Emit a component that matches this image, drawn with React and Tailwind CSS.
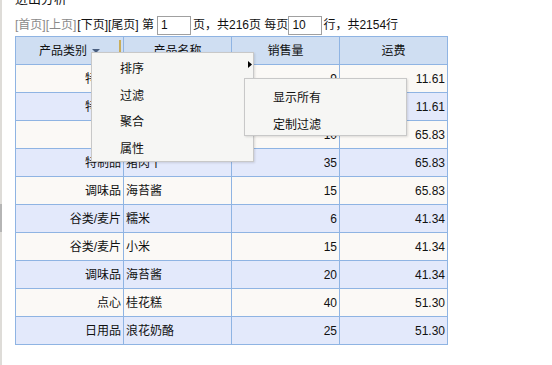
const rows = [
  ['特制品', '猪肉干', '9', '11.61'],
  ['特制品', '牛肉干', '9', '11.61'],
  ['饮料', '绿茶', '10', '65.83'],
  ['特制品', '猪肉干', '35', '65.83'],
  ['调味品', '海苔酱', '15', '65.83'],
  ['谷类/麦片', '糯米', '6', '41.34'],
  ['谷类/麦片', '小米', '15', '41.34'],
  ['调味品', '海苔酱', '20', '41.34'],
  ['点心', '桂花糕', '40', '51.30'],
  ['日用品', '浪花奶酪', '25', '51.30'],
];

const font = { fontFamily: '"Liberation Sans", "Noto Sans CJK SC", sans-serif' };

const Pager = () => (
  <div className="mt-[9px] flex h-[19px] items-center text-[12px] leading-[19px] text-[#111]">
    <span className="text-[#8a8a8a]">[首页][上页]</span>
    <span className="ml-[1px]">[下页][尾页] 第</span>
    <div className="ml-[3px] h-[19px] w-[34px] border border-[#a0a0a0] bg-white pl-[3px] text-[12px] leading-[17px]">1</div>
    <span className="ml-[2px]">页，共216页 每页</span>
    <div className="h-[19px] w-[34px] border border-[#a0a0a0] bg-white pl-[3px] text-[12px] leading-[17px]">10</div>
    <span className="ml-[1px]">行，共2154行</span>
  </div>
);

const Cell = ({ children, align = 'right', last = false }) => (
  <div
    className={`flex h-full items-center px-[2px] ${last ? 'w-[107px]' : 'w-[108px] border-r border-[#8fb4e3]'} ${
      align === 'right' ? 'justify-end' : 'justify-start'
    }`}
  >
    {children}
  </div>
);

const Table = () => (
  <div className="mt-[1px] w-[433px] border-l border-r border-t border-[#8fb4e3] text-[12px] text-[#111]">
    <div className="flex h-[28px] border-b border-[#8fb4e3] bg-[#cfdef2]">
      <div className="relative flex h-full w-[108px] items-center justify-center border-r border-[#8fb4e3]">
        <span>产品类别</span>
        <svg width="8" height="4" viewBox="0 0 8 4" className="ml-[5px]">
          <path d="M0 0 H8 L4 4 Z" fill="#4a5f80" />
        </svg>
        <div className="absolute right-[2px] top-[3px] h-[20px] w-[2px] bg-[#c9ad5a]"></div>
      </div>
      <div className="flex h-full w-[108px] items-center justify-center border-r border-[#8fb4e3]">产品名称</div>
      <div className="flex h-full w-[108px] items-center justify-center border-r border-[#8fb4e3]">销售量</div>
      <div className="flex h-full w-[107px] items-center justify-center">运费</div>
    </div>
    {rows.map((r, i) => (
      <div
        key={i}
        className={`flex h-[28px] border-b border-[#8fb4e3] ${i % 2 === 0 ? 'bg-[#fbf9f6]' : 'bg-[#e3e9fb]'}`}
      >
        <Cell>{r[0]}</Cell>
        <Cell align="left">{r[1]}</Cell>
        <Cell>{r[2]}</Cell>
        <Cell last>{r[3]}</Cell>
      </div>
    ))}
  </div>
);

const Menu = () => (
  <div className="absolute left-[89px] top-[52px] h-[110px] w-[163px] border border-[#c8c8c8] bg-[#f6f6f4] pt-[3px] text-[12px] text-[#111] shadow-[1px_1px_2px_rgba(0,0,0,0.12)]">
    {['排序', '过滤', '聚合', '属性'].map((t) => (
      <div key={t} className="flex h-[26.5px] items-center pl-[28px]">
        {t}
      </div>
    ))}
    <svg width="4" height="7" viewBox="0 0 4 7" className="absolute left-[156px] top-[8px]">
      <path d="M0 0 L4 3.5 L0 7 Z" fill="#000" />
    </svg>
  </div>
);

const SubMenu = () => (
  <div className="absolute left-[242px] top-[78px] h-[58px] w-[163px] border border-[#c8c8c8] bg-[#f6f6f4] pt-[5px] text-[12px] text-[#111] shadow-[1px_1px_2px_rgba(0,0,0,0.12)]">
    {['显示所有', '定制过滤'].map((t) => (
      <div key={t} className="flex h-[27px] items-center pl-[28px]">
        {t}
      </div>
    ))}
  </div>
);

export default function App() {
  return (
    <div className="flex h-[365px] w-[552px] overflow-hidden bg-white" style={font}>
      <div className="flex h-full w-[2px] flex-col bg-[#dedcd8]">
        <div className="mt-[204px] h-[28px] w-[2px] bg-[#b5b5b5]"></div>
      </div>
      <div className="relative flex-1 pl-[13px]">
        <div className="-mt-[9px] h-[16px] text-[13px] leading-[16px] text-[#111]">进出分析</div>
        <Pager />
        <Table />
        <Menu />
        <SubMenu />
      </div>
    </div>
  );
}
